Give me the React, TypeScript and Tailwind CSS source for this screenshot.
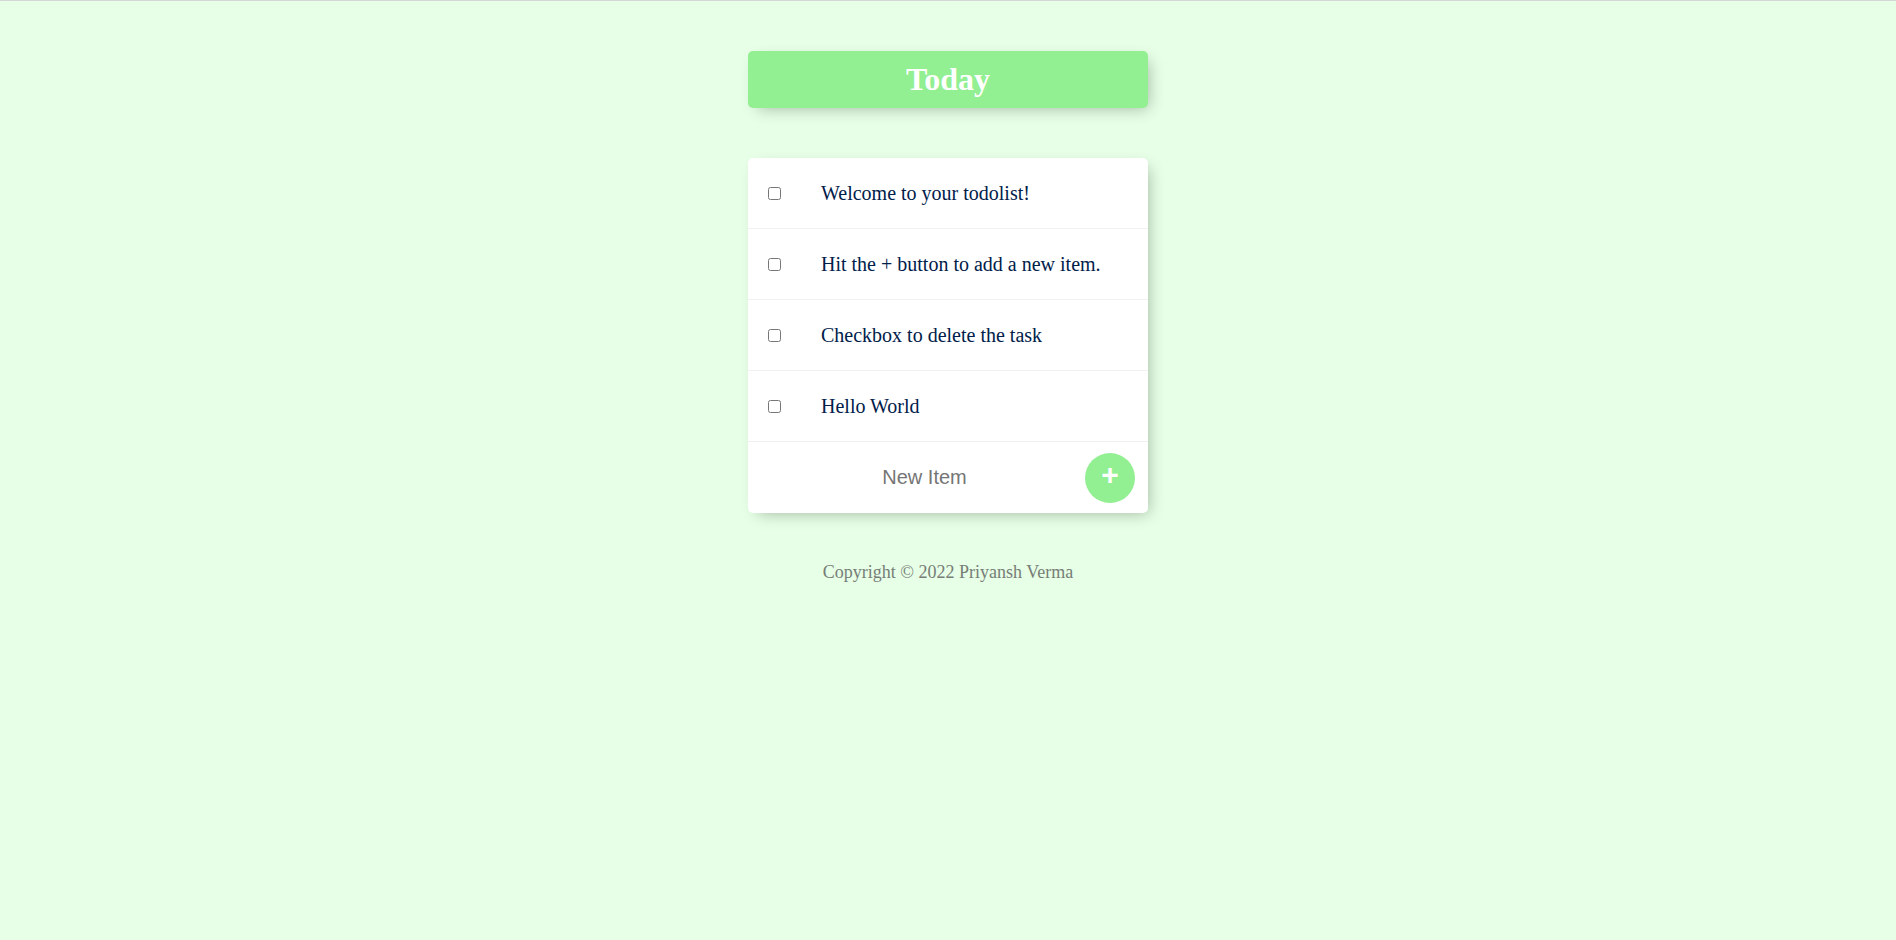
import { useState } from 'react'

const initialItems = [
  'Welcome to your todolist!',
  'Hit the + button to add a new item.',
  'Checkbox to delete the task',
  'Hello World',
]

export default function App() {
  const [items, setItems] = useState(initialItems)
  const [newItem, setNewItem] = useState('')

  const addItem = (e: React.FormEvent) => {
    e.preventDefault()
    if (!newItem.trim()) return
    setItems([...items, newItem.trim()])
    setNewItem('')
  }

  const removeItem = (index: number) => {
    setItems(items.filter((_, i) => i !== index))
  }

  return (
    <div className="min-h-screen bg-[#e6ffe6] border-t border-[#d6d6d6] font-['Liberation_Serif',serif] pb-10">
      {/* heading */}
      <div className="w-[400px] mx-auto mt-[50px] bg-[#92ef92] rounded-[5px] shadow-[5px_5px_15px_-5px_rgba(0,0,0,0.3)] text-center">
        <h1 className="p-[10px] text-[32px] leading-[37px] font-bold text-white">Today</h1>
      </div>

      {/* list */}
      <div className="w-[400px] mx-auto mt-[50px] bg-white rounded-[5px] shadow-[5px_5px_15px_-5px_rgba(0,0,0,0.3)]">
        {items.map((item, index) => (
          <div key={index} className="min-h-[71px] flex items-center border-b border-[#f1f1f1]">
            <input
              type="checkbox"
              onChange={() => removeItem(index)}
              className="m-[20px] w-[13px] h-[13px] shrink-0 appearance-auto"
            />
            <p className="p-[20px] text-[20px] leading-[23px] text-[#00204a]">{item}</p>
          </div>
        ))}
        <form onSubmit={addItem} className="h-[71px] ml-[20px] flex items-center">
          <input
            type="text"
            value={newItem}
            onChange={(e) => setNewItem(e.target.value)}
            placeholder="New Item"
            autoComplete="off"
            className="w-[313px] h-[60px] text-center text-[20px] font-['Liberation_Sans',Arial,sans-serif] text-[#00204a] placeholder:text-[#757575] outline-none"
          />
          <button
            type="submit"
            className="ml-[4px] w-[50px] h-[50px] rounded-full bg-[#92ef92] text-white text-[30px] font-bold leading-none pb-[6px] font-['Liberation_Sans',Arial,sans-serif] flex items-center justify-center"
          >
            +
          </button>
        </form>
      </div>

      <footer className="mt-[46px] text-center text-[18px] text-[#777d77]">
        <p>Copyright © 2022 Priyansh Verma</p>
      </footer>
    </div>
  )
}
